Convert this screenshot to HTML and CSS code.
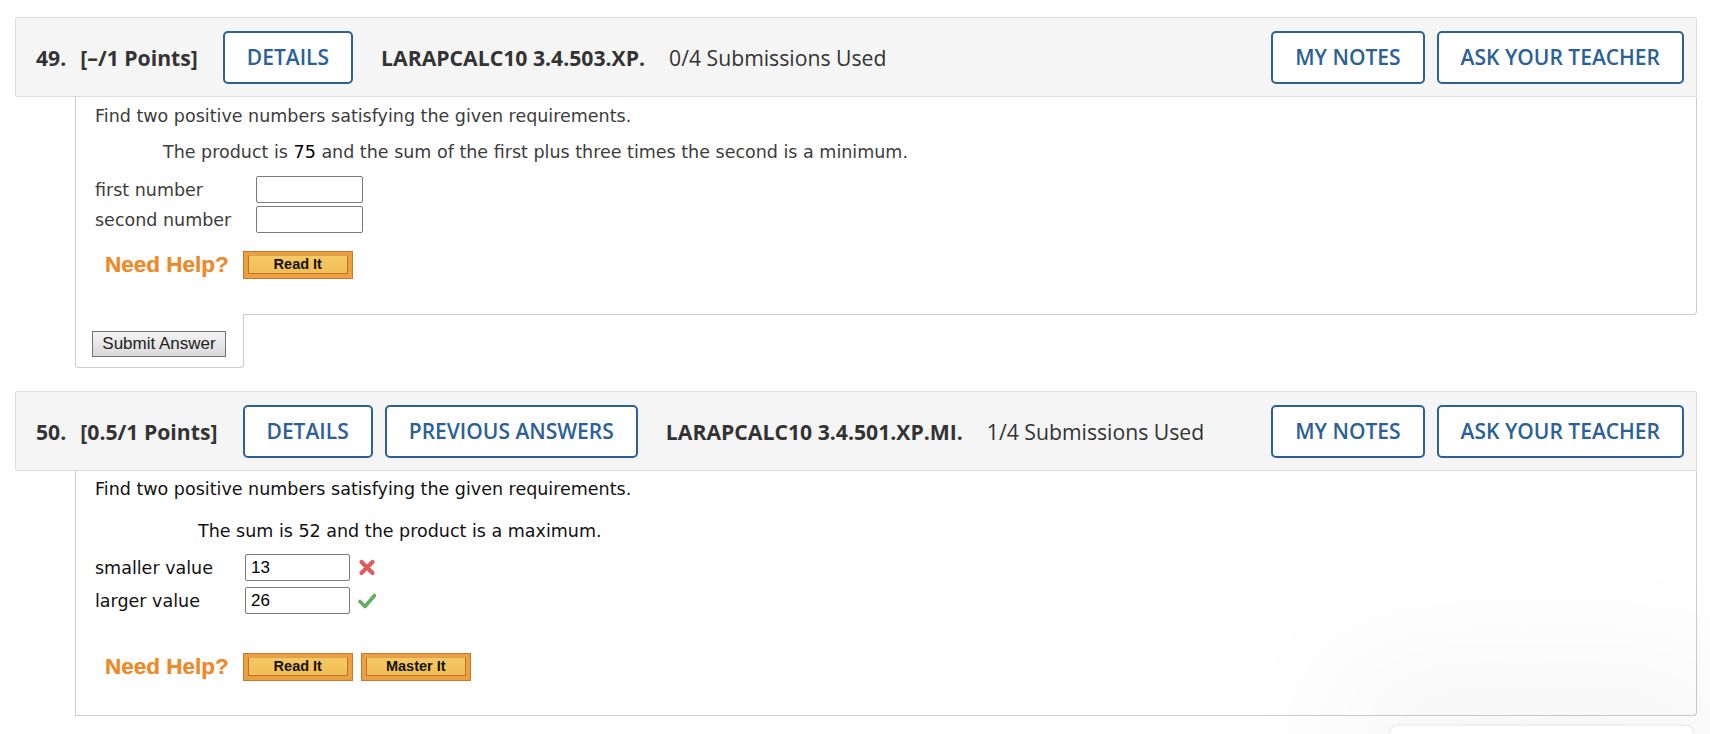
FILE: index.html
```html
<!DOCTYPE html>
<html lang="en">
<head>
<meta charset="utf-8">
<title>Questions</title>
<link rel="stylesheet" href="styles.css">
</head>
<body>
<div class="page">
  <section class="question">
    <div class="qhead">
      <span class="qnum">49.</span>
      <span class="qpts">[–/1 Points]</span>
      <button class="hbtn">DETAILS</button>
      <span class="qcode">LARAPCALC10 3.4.503.XP.</span>
      <span class="qsub">0/4 Submissions Used</span>
      <span class="spacer"></span>
      <button class="hbtn">MY NOTES</button>
      <button class="hbtn hbtn-last">ASK YOUR TEACHER</button>
    </div>
    <div class="qbody q49">
      <p class="intro">Find two positive numbers satisfying the given requirements.</p>
      <p class="stmt stmt49">The product is <span class="num">75</span> and the sum of the first plus three times the second is a minimum.</p>
      <div class="answers answers49">
        <label class="alabel">first number</label>
        <input class="ainput" type="text">
        <label class="alabel">second number</label>
        <input class="ainput" type="text">
      </div>
      <div class="help help49">
        <span class="need">Need Help?</span>
        <button class="hlp"><span>Read It</span></button>
      </div>
    </div>
    <div class="submit-tab">
      <button class="submit">Submit Answer</button>
    </div>
  </section>

  <section class="question q-second">
    <div class="qhead">
      <span class="qnum">50.</span>
      <span class="qpts">[0.5/1 Points]</span>
      <button class="hbtn">DETAILS</button>
      <button class="hbtn hbtn-prev">PREVIOUS ANSWERS</button>
      <span class="qcode">LARAPCALC10 3.4.501.XP.MI.</span>
      <span class="qsub">1/4 Submissions Used</span>
      <span class="spacer"></span>
      <button class="hbtn">MY NOTES</button>
      <button class="hbtn hbtn-last">ASK YOUR TEACHER</button>
    </div>
    <div class="qbody q50">
      <p class="intro">Find two positive numbers satisfying the given requirements.</p>
      <p class="stmt stmt50">The sum is 52 and the product is a maximum.</p>
      <div class="answers answers50">
        <label class="alabel">smaller value</label>
        <input class="ainput" type="text" value="13">
        <svg class="mark" width="18" height="17" viewBox="0 0 18 17" aria-label="incorrect">
          <path d="M3.5 3 L14.5 14 M14.5 3 L3.5 14" stroke="#e05b5b" stroke-width="4.2" stroke-linecap="round" fill="none"/>
        </svg>
        <label class="alabel">larger value</label>
        <input class="ainput" type="text" value="26">
        <svg class="mark" width="18" height="17" viewBox="0 0 18 17" aria-label="correct">
          <path d="M2 9.5 L7 14.5 L16.5 3.5" stroke="#62ad5f" stroke-width="3.6" stroke-linecap="round" stroke-linejoin="round" fill="none"/>
        </svg>
      </div>
      <div class="help help50">
        <span class="need">Need Help?</span>
        <button class="hlp"><span>Read It</span></button>
        <button class="hlp"><span>Master It</span></button>
      </div>
    </div>
  </section>
</div>
<div class="float-widget"></div>
</body>
</html>
```

FILE: styles.css
```css
html, body {
  margin: 0;
  padding: 0;
  background: #ffffff;
}

body {
  font-family: "DejaVu Sans", Verdana, sans-serif;
  overflow: hidden;
  height: 734px;
  position: relative;
}

.page {
  padding: 17px 13px 0 15px;
}

.q-second {
  margin-top: 23px;
}

.qhead {
  display: flex;
  align-items: center;
  box-sizing: border-box;
  height: 80px;
  border: 1px solid #dddddd;
  border-radius: 2px;
  background: #f5f5f5;
  padding: 0 12px 0 20px;
  font-family: "Open Sans", sans-serif;
  font-size: 21.2px;
  color: #333333;
  white-space: nowrap;
}

.qnum {
  font-weight: 700;
  margin-right: 14px;
}

.qpts {
  font-weight: 700;
  margin-right: 25px;
}

.qcode {
  font-weight: 700;
  margin-left: 28px;
  margin-right: 24px;
}

.qsub {
  font-weight: 400;
}

.spacer {
  flex: 1;
}

.hbtn {
  box-sizing: border-box;
  height: 53px;
  border: 2px solid #2b6196;
  border-radius: 5px;
  background: #ffffff;
  color: #2b6196;
  font-family: "Open Sans", sans-serif;
  font-weight: 600;
  font-size: 21px;
  padding: 0 22px;
  margin: 0;
  cursor: pointer;
}

.hbtn-prev {
  margin-left: 12px;
}

.hbtn-last {
  margin-left: 12px;
}

.qbody {
  margin-left: 60px;
  border: 1px solid #cccccc;
  border-top: none;
  border-radius: 0 0 4px 0;
  background: #ffffff;
  padding: 9px 19px 35px;
  font-size: 17.5px;
  line-height: 20px;
}

.q49 {
  color: #3c3c3c;
}

.q50 {
  color: #111111;
  padding-top: 8px;
  padding-bottom: 34px;
}

.intro,
.stmt {
  margin: 0;
  white-space: nowrap;
}

.stmt49 {
  margin-top: 16px;
  padding-left: 68px;
}

.stmt50 {
  margin-top: 22px;
  padding-left: 103px;
}

.num {
  color: #000000;
}

.answers {
  display: grid;
  align-items: center;
  justify-items: start;
}

.answers49 {
  grid-template-columns: 161px 107px;
  row-gap: 3px;
  margin-top: 14px;
}

.answers50 {
  grid-template-columns: 150px 105px 26px;
  row-gap: 6px;
  margin-top: 13px;
}

.alabel {
  white-space: nowrap;
}

.ainput {
  box-sizing: border-box;
  width: 100%;
  height: 27px;
  border: 1px solid #7a7a7a;
  border-radius: 2px;
  padding: 0 5px;
  margin: 0;
  font-family: "Liberation Sans", Arial, sans-serif;
  font-size: 17px;
  color: #000000;
  background: #ffffff;
}

.mark {
  margin-left: 8px;
  display: block;
}

.help {
  display: flex;
  align-items: center;
  margin-left: 10px;
}

.help49 {
  margin-top: 18px;
}

.help50 {
  margin-top: 39px;
}

.need {
  font-family: "Liberation Sans", Arial, sans-serif;
  font-weight: 700;
  font-size: 22.5px;
  color: #e98a2c;
  text-shadow: 0 0 1px rgba(233, 138, 44, 0.55);
  margin-right: 14px;
  line-height: 28px;
}

.hlp {
  box-sizing: border-box;
  width: 110px;
  height: 28px;
  padding: 3px 4px 4px;
  margin: 0;
  border: 1px solid #c47a2a;
  background: #eda041;
  cursor: pointer;
}

.hlp + .hlp {
  margin-left: 8px;
}

.hlp span {
  display: block;
  box-sizing: border-box;
  height: 19px;
  border: 1px solid #b6772c;
  border-top-color: #d9a04e;
  background: linear-gradient(#f6c965, #f2bd55);
  font-family: "Liberation Sans", Arial, sans-serif;
  font-weight: 700;
  font-size: 14.5px;
  line-height: 17px;
  color: #141414;
  text-align: center;
}

.submit-tab {
  position: relative;
  width: max-content;
  margin-left: 60px;
  margin-top: -1px;
  border: 1px solid #cccccc;
  border-top: none;
  border-radius: 0 0 4px 4px;
  background: #ffffff;
  padding: 17px 17px 10px 16px;
}

.submit {
  box-sizing: border-box;
  display: block;
  width: 134px;
  height: 26px;
  margin: 0;
  padding: 0;
  border: 1px solid #727272;
  background: linear-gradient(#f4f4f4, #d9d9d9);
  font-family: "Liberation Sans", Arial, sans-serif;
  font-size: 17px;
  color: #222222;
  cursor: pointer;
}

.float-widget {
  position: absolute;
  left: 1390px;
  top: 726px;
  width: 303px;
  height: 8px;
  background: #ffffff;
  border-radius: 9px 9px 0 0;
  box-shadow: 0 0 4px rgba(0, 0, 0, 0.12), 0 0 140px 60px rgba(0, 0, 0, 0.045);
  pointer-events: none;
}
```
